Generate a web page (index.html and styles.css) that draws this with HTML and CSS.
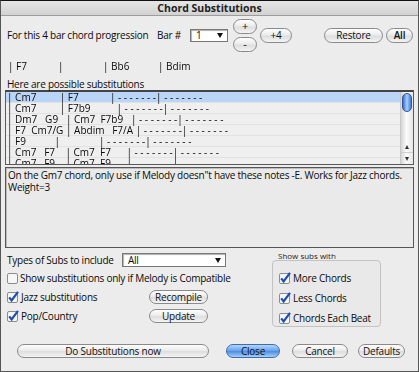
FILE: index.html
```html
<!DOCTYPE html>
<html lang="en">
<head>
  <meta charset="UTF-8" />
  <title>Chord Substitutions</title>
  <link rel="stylesheet" href="styles.css">
</head>
<body>
  <div class="window">
    <div class="titlebar">Chord Substitutions</div>

    <div class="content">
      <div class="top-row">
        <span class="label prog">For this 4 bar chord progression</span>
        <span class="bar-label">Bar #</span>
        <div class="select bar-select"><span>1</span><span class="arrow"></span></div>
        <div class="stepper">
          <button class="btn round">+</button>
          <button class="btn round">-</button>
        </div>
        <button class="btn plus4">+4</button>
        <button class="btn restore">Restore</button>
        <button class="btn all">All</button>
      </div>

      <div class="chord-line">
        <span class="c1">| F7</span>
        <span class="c2">|</span>
        <span class="c3">| Bb6</span>
        <span>| Bdim</span>
      </div>

      <div class="label list-title">Here are possible substitutions</div>

      <div class="list">
        <div class="rows">
          <div class="row selected">| Cm7         | F7            | - - - - - - -| - - - - - - -</div>
          <div class="row">| Cm7         | F7b9          | - - - - - - -| - - - - - - -</div>
          <div class="row">| Dm7   G9   | Cm7  F7b9   | - - - - - - -| - - - - - - -</div>
          <div class="row">| F7  Cm7/G | Abdim   F7/A | - - - - - - -| - - - - - - -</div>
          <div class="row">| F9           |               | - - - - - - -| - - - - - - -</div>
          <div class="row">| Cm7   F7    | Cm7  F7      | - - - - - - -| - - - - - - -</div>
          <div class="row">| Cm7   F9    | Cm7  F9      | - - - - - - -| - - - - - - -</div>
        </div>
        <div class="scrollbar">
          <div class="thumb"></div>
          <div class="arrows">
            <span class="up"></span>
            <span class="down"></span>
          </div>
        </div>
      </div>

      <div class="notes">On the Gm7 chord, only use if Melody doesn"t have these notes -E. Works for Jazz chords.<br>Weight=3</div>

      <div class="options">
        <div class="left-col">
          <div class="types-row">
            <span class="label types-label">Types of Subs to include</span>
            <div class="select types-select"><span>All</span><span class="arrow"></span></div>
          </div>

          <div class="check-row first">
            <span class="check">
              <svg width="11" height="11" viewBox="0 0 11 11"><rect x="0.5" y="0.5" width="10" height="10" rx="1.5" fill="#f6f6f6" stroke="#8c8c8c"/></svg>
              Show substitutions only if Melody is Compatible
            </span>
          </div>

          <div class="check-row">
            <span class="check wide">
              <svg width="12" height="12" viewBox="0 0 12 12"><rect x="0.5" y="1.5" width="10" height="10" rx="1.5" fill="#f6f6f6" stroke="#8c8c8c"/><path d="M2.2 6.3 L4.6 9.4 L11 0.8" fill="none" stroke="#1f4fae" stroke-width="2.2"/></svg>
              Jazz substitutions
            </span>
            <button class="btn side-btn">Recompile</button>
          </div>

          <div class="check-row">
            <span class="check wide">
              <svg width="12" height="12" viewBox="0 0 12 12"><rect x="0.5" y="1.5" width="10" height="10" rx="1.5" fill="#f6f6f6" stroke="#8c8c8c"/><path d="M2.2 6.3 L4.6 9.4 L11 0.8" fill="none" stroke="#1f4fae" stroke-width="2.2"/></svg>
              Pop/Country
            </span>
            <button class="btn side-btn">Update</button>
          </div>
        </div>

        <div class="right-col">
          <div class="group-title">Show subs with</div>
          <div class="group">
            <span class="check">
              <svg width="12" height="12" viewBox="0 0 12 12"><rect x="0.5" y="1.5" width="10" height="10" rx="1.5" fill="#f6f6f6" stroke="#8c8c8c"/><path d="M2.2 6.3 L4.6 9.4 L11 0.8" fill="none" stroke="#1f4fae" stroke-width="2.2"/></svg>
              More Chords
            </span>
            <span class="check">
              <svg width="12" height="12" viewBox="0 0 12 12"><rect x="0.5" y="1.5" width="10" height="10" rx="1.5" fill="#f6f6f6" stroke="#8c8c8c"/><path d="M2.2 6.3 L4.6 9.4 L11 0.8" fill="none" stroke="#1f4fae" stroke-width="2.2"/></svg>
              Less Chords
            </span>
            <span class="check">
              <svg width="12" height="12" viewBox="0 0 12 12"><rect x="0.5" y="1.5" width="10" height="10" rx="1.5" fill="#f6f6f6" stroke="#8c8c8c"/><path d="M2.2 6.3 L4.6 9.4 L11 0.8" fill="none" stroke="#1f4fae" stroke-width="2.2"/></svg>
              Chords Each Beat
            </span>
          </div>
        </div>
      </div>

      <div class="bottom-row">
        <button class="btn do-subs">Do Substitutions now</button>
        <button class="btn close">Close</button>
        <button class="btn cancel">Cancel</button>
        <button class="btn defaults">Defaults</button>
      </div>
    </div>
  </div>
</body>
</html>
```

FILE: styles.css
```css
body {
  margin: 0;
  font-family: "Open Sans", "DejaVu Sans", sans-serif;
  font-size: 10px;
  letter-spacing: -0.25px;
  color: #0a0a0a;
}
.window {
  width: 419px;
  height: 372px;
  box-sizing: border-box;
  border: 1px solid #555;
  border-top-color: #111;
  background: #ececec;
  overflow: hidden;
}
.titlebar {
  height: 14px;
  line-height: 14px;
  border-bottom: 1px solid #9c9c9c;
  background: linear-gradient(#e6e6e6, #d2d2d2);
  text-align: center;
  font-weight: bold;
  font-size: 10.5px;
  letter-spacing: 0;
  color: #222;
}
.content {
  padding: 0 4px;
}
.label {
  margin-left: 2px;
}

/* top row */
.top-row {
  display: flex;
  align-items: center;
  height: 38px;
}
.prog {
  width: 150px;
  white-space: nowrap;
}
.bar-label {
  width: 33px;
}
.select {
  display: flex;
  align-items: center;
  justify-content: space-between;
  box-sizing: border-box;
  height: 13px;
  padding: 0 4px 0 5px;
  background: #fff;
  border: 1px solid #777;
  box-shadow: inset 1px 1px 1px #b0b0b0;
}
.arrow {
  width: 0;
  height: 0;
  border-left: 3px solid transparent;
  border-right: 3px solid transparent;
  border-top: 5px solid #111;
}
.bar-select {
  width: 38px;
}
.stepper {
  display: flex;
  flex-direction: column;
  gap: 3px;
  margin-left: 5px;
}
.btn {
  box-sizing: border-box;
  height: 14px;
  padding: 0;
  font-family: inherit;
  font-size: 10px;
  letter-spacing: -0.2px;
  line-height: 12px;
  color: #111;
  border: 1px solid #8a8a8a;
  border-radius: 8px;
  background: linear-gradient(#fefefe, #ececec 45%, #dedede 55%, #f4f4f4);
}
.round {
  width: 24px;
  height: 15px;
  font-size: 11px;
}
.plus4 {
  width: 32px;
  height: 15px;
  margin-left: 3px;
}
.restore {
  width: 59px;
  height: 15px;
  margin-left: 32px;
}
.all {
  width: 27px;
  height: 15px;
  margin-left: 3px;
  font-weight: 600;
}

/* chord line: own layer so the thin bars stay grey */
.chord-line {
  display: flex;
  margin: 6px 0 0 3px;
  line-height: 12px;
  letter-spacing: 0;
  will-change: transform;
}
.c1 {
  width: 50px;
}
.c2 {
  width: 45px;
}
.c3 {
  width: 55px;
}
.list-title {
  margin-top: 6px;
  line-height: 12px;
}

/* list */
.list {
  display: flex;
  height: 75px;
  box-sizing: border-box;
  border: 1px solid #5a5a5a;
  border-top: 2px solid #444;
  background: #efefef;
  overflow: hidden;
}
.rows {
  flex: 1;
  will-change: transform;
}
.row {
  height: 10px;
  line-height: 10px;
  padding-left: 1px;
  letter-spacing: 0;
  border-bottom: 1px solid #e2e2e2;
  white-space: pre;
}
.row.selected {
  background: #b9d5f7;
}
.scrollbar {
  width: 12px;
  display: flex;
  flex-direction: column;
  border-left: 1px solid #c8c8c8;
  background: linear-gradient(to right, #d6d6d6, #fbfbfb 45%, #e6e6e6);
}
.thumb {
  height: 17px;
  margin: 1px 1px 0;
  border-radius: 5px;
  border: 1px solid #2d56a8;
  background: linear-gradient(to right, #3a6fd0, #a8d0fa 50%, #3f78d8);
}
.arrows {
  margin-top: auto;
  display: flex;
  flex-direction: column;
  align-items: center;
}
.up, .down {
  display: flex;
  align-items: center;
  justify-content: center;
  width: 100%;
  height: 11px;
}
.up::after {
  content: "";
  border-left: 2.5px solid transparent;
  border-right: 2.5px solid transparent;
  border-bottom: 4px solid #333;
}
.down {
  border-top: 1px solid #cfcfcf;
}
.down::after {
  content: "";
  border-left: 2.5px solid transparent;
  border-right: 2.5px solid transparent;
  border-top: 4px solid #333;
}

/* notes */
.notes {
  margin-top: 2px;
  height: 81px;
  box-sizing: border-box;
  padding: 1px 2px;
  line-height: 12px;
  border: 1px solid #555;
  background: #eaeaea;
  box-shadow: inset 1px 1px 0 #bdbdbd;
}

/* options */
.options {
  display: flex;
}
.left-col {
  width: 266px;
}
.types-row {
  display: flex;
  align-items: center;
  margin-top: 5px;
  height: 14px;
}
.types-label {
  width: 115px;
}
.types-select {
  width: 104px;
  height: 14px;
}
.check-row {
  display: flex;
  align-items: center;
  height: 15px;
  margin-top: 4px;
}
.check-row.first {
  margin-top: 4px;
  height: 14px;
}
.check {
  display: flex;
  align-items: center;
  gap: 2px;
  margin-left: 2px;
  white-space: nowrap;
}
.check.wide {
  width: 142px;
}
.side-btn {
  width: 59px;
  height: 14px;
}
.right-col {
  width: 109px;
  margin-left: 1px;
}
.group-title {
  margin: 3px 0 0 6px;
  font-size: 8px;
  letter-spacing: 0;
  line-height: 9px;
  color: #222;
}
.group {
  display: flex;
  flex-direction: column;
  gap: 6px;
  height: 67px;
  box-sizing: border-box;
  padding: 10px 0 0 4px;
  border: 1px solid #c2c2c2;
  border-radius: 4px;
  background: #e9e9e9;
}
.group .check {
  height: 14px;
}

/* bottom buttons */
.bottom-row {
  display: flex;
  margin-top: 17px;
}
.do-subs {
  width: 192px;
  margin-left: 12px;
}
.close {
  width: 54px;
  margin-left: 17px;
  border-color: #3f6cb0;
  background: linear-gradient(#b4d6fb, #6aa6ec 45%, #4f8fe0 55%, #a6d0fa);
}
.cancel {
  width: 56px;
  margin-left: 12px;
}
.defaults {
  width: 47px;
  margin-left: 10px;
}
```
